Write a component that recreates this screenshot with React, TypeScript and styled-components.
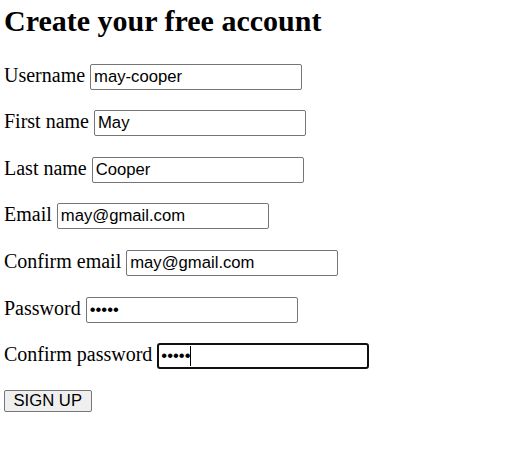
import React from "react";
import styled, { createGlobalStyle, css } from "styled-components";

const GlobalStyle = createGlobalStyle`
  html, body { margin: 0; padding: 0; background: #ffffff; }
  body { font-family: "Liberation Serif", "Times New Roman", serif; color: #000; }
`;

const Page = styled.section`
  padding: 4px 4px;
  display: flex;
  flex-direction: column;
`;

const Title = styled.h1`
  margin: 0 0 25.5px 0;
  font-size: 30px;
  font-weight: bold;
  line-height: normal;
`;

const Form = styled.form`
  display: flex;
  flex-direction: column;
  gap: 20.67px;
  align-items: flex-start;
`;

const Row = styled.div`
  display: flex;
  align-items: baseline;
  gap: 5px;
`;

const Label = styled.label`
  font-size: 20px;
  line-height: normal;
  white-space: nowrap;
`;

const FieldWrap = styled.span`
  position: relative;
  display: inline-flex;
  align-items: baseline;
`;

const Caret = styled.span`
  position: absolute;
  left: 33px;
  top: 3px;
  width: 1px;
  height: 20px;
  background: #000;
  pointer-events: none;
`;

const Field = styled.input<{ $focused?: boolean }>`
  box-sizing: border-box;
  width: 212px;
  height: 26px;
  margin: 0;
  padding: 0 3px;
  font-family: "Liberation Sans", Arial, sans-serif;
  font-size: 16.67px;
  color: #000;
  background: #fff;
  border: 1px solid #767676;
  border-radius: 2px;
  outline: none;
  caret-color: transparent;
  ${(p) =>
    p.$focused &&
    css`
      border: 2px solid #101010;
      border-radius: 3px;
      padding: 0 2px;
    `}
`;

const SubmitButton = styled.button`
  box-sizing: border-box;
  height: 22px;
  margin: 0;
  padding: 0 8.5px;
  font-family: "Liberation Sans", Arial, sans-serif;
  font-size: 16.67px;
  color: #000;
  background: #efefef;
  border: 1px solid #767676;
  border-radius: 2px;
  line-height: normal;
`;

const fields: { id: string; label: string; value: string; type?: string; focused?: boolean }[] = [
  { id: "username", label: "Username", value: "may-cooper" },
  { id: "first", label: "First name", value: "May" },
  { id: "last", label: "Last name", value: "Cooper" },
  { id: "email", label: "Email", value: "may@gmail.com" },
  { id: "email2", label: "Confirm email", value: "may@gmail.com" },
  { id: "pw", label: "Password", value: "12345", type: "password" },
  { id: "pw2", label: "Confirm password", value: "12345", type: "password", focused: true },
];

export default function App() {
  return (
    <>
      <GlobalStyle />
      <Page>
        <Title>Create your free account</Title>
        <Form onSubmit={(e) => e.preventDefault()}>
          {fields.map((f) => (
            <Row key={f.id}>
              <Label htmlFor={f.id}>{f.label}</Label>
              <FieldWrap>
                <Field
                  id={f.id}
                  type={f.type ?? "text"}
                  defaultValue={f.value}
                  $focused={f.focused}
                />
                {f.focused && <Caret />}
              </FieldWrap>
            </Row>
          ))}
          <SubmitButton type="submit">SIGN UP</SubmitButton>
        </Form>
      </Page>
    </>
  );
}
